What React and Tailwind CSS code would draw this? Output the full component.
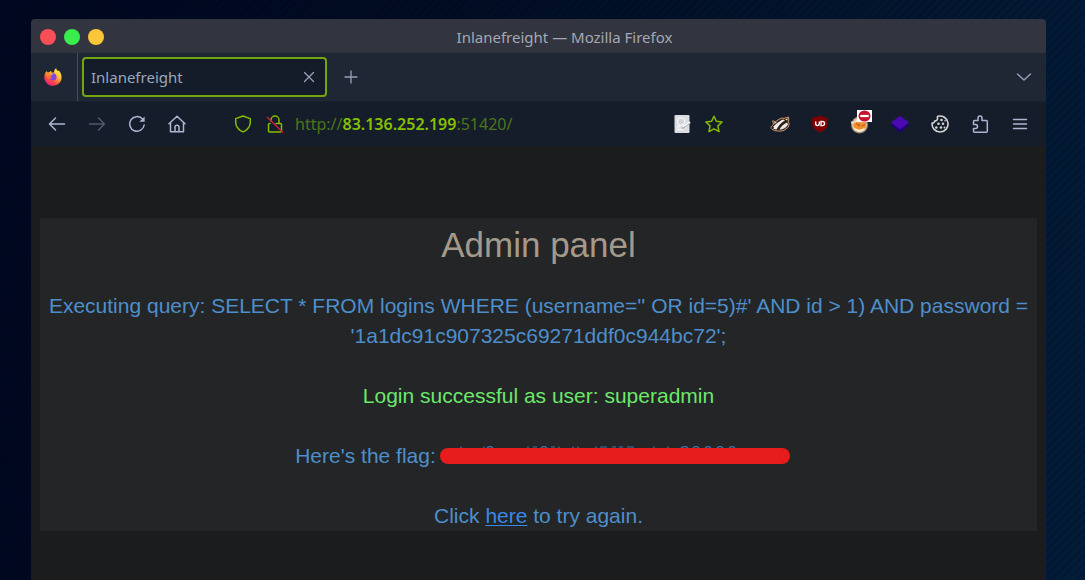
import { useState } from "react";

const line = {
  fill: "none",
  stroke: "currentColor",
  strokeLinecap: "round",
  strokeLinejoin: "round",
};

function Icon({ size = 18, width = 1.5, children }) {
  return (
    <svg width={size} height={size} viewBox="0 0 18 18" {...line} strokeWidth={width} aria-hidden="true">
      {children}
    </svg>
  );
}

function FirefoxLogo() {
  return (
    <svg width="18" height="18" viewBox="0 0 18 18" aria-hidden="true">
      <defs>
        <linearGradient id="flame" x1="0.85" y1="0.05" x2="0.25" y2="1">
          <stop offset="0" stopColor="#fff44f" />
          <stop offset="0.4" stopColor="#ffb02e" />
          <stop offset="0.7" stopColor="#ff4a3f" />
          <stop offset="1" stopColor="#e3168c" />
        </linearGradient>
      </defs>
      <path
        d="M2.4 3.2c.3 0 .9.6 1.4 1.2.5-.2 1-.2 1.500-.1C5.900 3.500 6.700 2.900 7.400 2.700c-.3.600-.3 1.200 0 1.700h2.700C9.900 2.800 10.700 1 12.200.2c.2 1.500 1 2.100 2 3.100.2-.3.200-.7.100-1.100 2 1.500 3.300 4.200 3.300 7.100 0 4.900-3.800 8.500-8.600 8.500S.3 14 .3 9.200C.3 6.700 1 4.700 2.400 3.200z"
        fill="url(#flame)"
      />
      <path d="M9 5.300c2.300 0 3.600 1.600 3.600 3.600S11.200 12.600 9.200 12.600 5.700 11.300 5.500 9.800c1.300.9 2.200.7 3-.2C7 9.300 6.100 8.600 6.400 7.800c.5-.6 1.800-.4 2.600-1.200-.6-.2-.9-.4-1-.9.300-.3.600-.4 1-.4z" fill="#8045e8" />
      <path d="M2.300 5.700c1.600-.4 3.700.1 5 .9-.9 1-2.400.8-3 1.600-.3 1.600 1.300 2.700 3 2.400-2.300 1.400-4.800-.500-5-4.900z" fill="#ff8a22" />
    </svg>
  );
}

function Badger() {
  return (
    <svg width="20" height="18" viewBox="0 0 20 18" aria-hidden="true">
      <path d="M.8 13.300c.4-1.700 1.800-2.600 2.700-4.100L2.600 5.800l3 .8L9 4.300l3-1.300 2 .4L18.500 2l.3 3-.5 2 1 1.500-1 3.600-4.300 3.300-4 .8-5.500-.6z" fill="#2a211e" stroke="#c99a76" strokeWidth="1" />
      <path d="M2 13.700c1.600-3.200 6.500-7.200 11-9.300l2 .8C11 7.500 8.500 10.800 6.500 14.500z" fill="#f4eee8" />
      <path d="M9.500 14.800c1-3 3.500-5.500 7.500-7.300l1.200 1.500c-1.300 3-3.700 5-8.700 5.800z" fill="#e9e4df" />
      <path d="M4 7.300l3-.3-2.400 2zM15 4.500l2.700-1.200-.3 2.200z" fill="#f1d8c1" />
      <path d="M1 13.400l1.500-1.600 1.600.7-.8 1.600z" fill="#111" />
    </svg>
  );
}

function UblockShield() {
  return (
    <svg width="18" height="18" viewBox="0 0 18 18" aria-hidden="true">
      <path d="M9 .4c2.500 1.500 5 2 7.800 2v6.200c0 4-3 6.700-7.800 9-4.800-2.300-7.800-5-7.800-9V2.400C4 2.400 6.500 1.900 9 .4z" fill="#800000" />
      <path d="M4.700 6.500v2.300a1.800 1.800 0 0 0 3.600 0V6.500M10 6.500v4.100h1.500a2 2 0 0 0 0-4.100z" fill="none" stroke="#fff" strokeWidth="1.400" />
    </svg>
  );
}

function FoxyProxy() {
  return (
    <svg width="24" height="24" viewBox="0 0 24 24" aria-hidden="true">
      <circle cx="9.500" cy="15" r="8.500" fill="#a08b78" />
      <circle cx="9.500" cy="15" r="7.300" fill="#eccaa4" />
      <path d="M.5 11.500l4 .6L7.500 9l3.500 2-3.500 3.500-5.500-.5z" fill="#eee6dd" />
      <path d="M3.500 13l5-1.500 3 1 4.500-.5v5L13 19.500H6.500L3.500 16.500z" fill="#f28f2c" />
      <path d="M6 13.500l4 1.700-2.500.6M11 16.500l4-2" fill="none" stroke="#b0601c" strokeWidth="1" />
      <path d="M5 19l4.500 2 4.500-2" fill="none" stroke="#fff3df" strokeWidth="1.400" />
      <rect x="7" y="0" width="15" height="12" fill="#fff" />
      <ellipse cx="14.500" cy="6" rx="6" ry="5.600" fill="#c4122f" />
      <rect x="10.300" y="4.900" width="8.400" height="2.200" fill="#fff" />
    </svg>
  );
}

function Layers() {
  return (
    <svg width="18" height="18" viewBox="0 0 18 18" aria-hidden="true">
      <path d="M0 10l9-6 9 6-9 7.500z" fill="#22007d" />
      <path d="M0 7.500L9 .8l9 6.700-9 6.700z" fill="#4a09b3" />
    </svg>
  );
}

function Cookie() {
  return (
    <svg width="18" height="18" viewBox="0 0 18 18" aria-hidden="true">
      <path d="M6.800 1.300A8 8 0 1 1 1.100 8.100c1.500.2 2.500-.5 2.500-2C5.500 6 7.300 4.600 6.300 2.200z" fill="none" stroke="#d3d3d3" strokeWidth="1.600" strokeLinejoin="round" />
      <g fill="#d3d3d3">
        <circle cx="10.500" cy="5" r="1.300" />
        <circle cx="7.500" cy="8.700" r="1.300" />
        <circle cx="12" cy="8.800" r="1.300" />
        <circle cx="5.300" cy="12.500" r="1.300" />
        <circle cx="10" cy="12.500" r="1.300" />
        <circle cx="13.500" cy="12.500" r=".9" />
        <circle cx="14" cy="5.800" r=".8" />
      </g>
    </svg>
  );
}

function PageNote() {
  return (
    <svg width="18" height="18" viewBox="0 0 18 18" aria-hidden="true">
      <rect x="1.500" y="0" width="15" height="18" rx="1" fill="#dcdde0" />
      <circle cx="8" cy="6.500" r="3.600" fill="#d3d5d9" stroke="#f6f7f8" strokeWidth="1.200" />
      <path d="M3.500 14.500h7M4 12l3-1" stroke="#f7f7f7" strokeWidth="1.500" />
      <path d="M9 13.500l8.500-6" stroke="#969aa1" strokeWidth="1.300" />
      <path d="M10 12l7-5" stroke="#fff" strokeWidth="1.200" />
    </svg>
  );
}

function ToolButton({ label, className = "", children }) {
  return (
    <button type="button" aria-label={label} className={`flex h-9 w-10 shrink-0 items-center justify-center ${className}`}>
      {children}
    </button>
  );
}

function AddressField() {
  const [url, setUrl] = useState("http://83.136.252.199:51420/");
  const [editing, setEditing] = useState(false);
  return (
    <div className="relative h-8 min-w-0 flex-1">
      <input
        id="address"
        aria-label="Address"
        value={editing ? url : ""}
        onChange={(e) => setUrl(e.target.value)}
        onFocus={() => setEditing(true)}
        onBlur={() => setEditing(false)}
        className="h-8 w-full bg-transparent pl-1 text-base text-[#7fb800] outline-none"
      />
      {!editing && (
        <span className="pointer-events-none absolute inset-y-0 left-1 flex items-center text-base whitespace-nowrap text-[#4b761b]">
          http://<b className="font-semibold text-[#84c000]">83.136.252.199</b>:51420/
        </span>
      )}
    </div>
  );
}

function TitleBar() {
  return (
    <header className="grid h-[34px] grid-cols-[1fr_auto_1fr] items-center rounded-t-sm bg-[#32353f] pt-0.5">
      <div className="flex gap-2 pl-[9px]">
        <button type="button" aria-label="Close window" className="size-4 rounded-full bg-[#f84f57]" />
        <button type="button" aria-label="Maximize window" className="size-4 rounded-full bg-[#38ed4c]" />
        <button type="button" aria-label="Minimize window" className="size-4 rounded-full bg-[#fdc638]" />
      </div>
      <span className="pl-13 text-[15px] text-[#a5a8b3]">Inlanefreight — Mozilla Firefox</span>
    </header>
  );
}

function TabStrip() {
  return (
    <div className="flex h-12 items-center bg-[#1f2734] pr-0.5 text-[#95a1b9]">
      <div className="flex h-full w-[47px] items-center justify-center border-r border-[#454d5e] pr-0.5">
        <FirefoxLogo />
      </div>
      <div className="ml-1 flex h-10 w-[245px] items-center justify-between rounded-sm border-2 border-[#73a60e] bg-[#141c29] pr-1 pl-[7px]">
        <span className="text-[15px] text-[#9aa7c0]">Inlanefreight</span>
        <button type="button" aria-label="Close tab" className="flex size-6 items-center justify-center">
          <Icon width={1.3}><path d="M4.500 4.500l9 9M13.500 4.500l-9 9" /></Icon>
        </button>
      </div>
      <ToolButton label="New tab" className="ml-1">
        <Icon width={1.3}><path d="M9 3v12M3 9h12" /></Icon>
      </ToolButton>
      <ToolButton label="List all tabs" className="ml-auto">
        <Icon width={1.4}><path d="M2.500 6L9 12l6.500-6" /></Icon>
      </ToolButton>
    </div>
  );
}

function NavBar() {
  return (
    <nav aria-label="Browser toolbar" className="flex h-[45px] items-center border-t border-[#18212f] bg-[#151d2a] px-1.5 text-[#aab6d3]">
      <ToolButton label="Back"><Icon><path d="M16.500 9h-15M7.500 3l-6 6 6 6" /></Icon></ToolButton>
      <ToolButton label="Forward" className="text-[#505a6c]"><Icon><path d="M1.500 9h15M10.500 3l6 6-6 6" /></Icon></ToolButton>
      <ToolButton label="Reload">
        <Icon>
          <path d="M16.200 10a7.300 7.300 0 1 1-2-6.200l1.300 1.300" />
          <path d="M16.600 1.500v5.200h-5.200z" fill="currentColor" stroke="none" />
        </Icon>
      </ToolButton>
      <ToolButton label="Home">
        <Icon><path d="M1 8.700L9 1.200l8 7.500M2.500 7.500v9.200h13V7.500M7 16.500v-4.300c0-2.500 4-2.500 4 0v4.300" /></Icon>
      </ToolButton>
      <div className="mr-[30px] ml-[30px] flex min-w-0 flex-1 items-center text-[#84bd00]">
        <button type="button" aria-label="Tracking protection" className="flex size-8 shrink-0 items-center justify-center">
          <Icon><path d="M9 1l7.300 2.600v3.600c0 4.400-2.700 7.600-7.300 9.700-4.600-2.100-7.300-5.300-7.300-9.700V3.600z" /></Icon>
        </button>
        <button type="button" aria-label="Connection not secure" className="flex size-8 shrink-0 items-center justify-center">
          <Icon>
            <path d="M5 6V5a4 4 0 0 1 8 0v3.500M4 8.500h-.5a1 1 0 0 0-1 1V16a1 1 0 0 0 1 1h11a1 1 0 0 0 1-1V9.500a1 1 0 0 0-1-1H10" />
            <path d="M1.500 2.500l15 14.500" stroke="#d11a47" />
          </Icon>
        </button>
        <AddressField />
        <button type="button" aria-label="Page action" className="flex size-8 shrink-0 items-center justify-center"><PageNote /></button>
        <button type="button" aria-label="Bookmark this page" className="flex size-8 shrink-0 items-center justify-center">
          <Icon><path d="M9 1.200l2.400 5.100 5.700.7-4.200 3.900 1.100 5.700-5-2.800-5 2.800 1.100-5.700L.9 7l5.700-.7z" /></Icon>
        </button>
      </div>
      <ToolButton label="Privacy Badger"><Badger /></ToolButton>
      <ToolButton label="uBlock Origin"><UblockShield /></ToolButton>
      <ToolButton label="FoxyProxy" className="pb-1 pl-1"><FoxyProxy /></ToolButton>
      <ToolButton label="Layers"><Layers /></ToolButton>
      <ToolButton label="Cookie editor"><Cookie /></ToolButton>
      <ToolButton label="Extensions">
        <Icon><path d="M2.500 8V6.500a1 1 0 0 1 1-1H7V3a2 2 0 0 1 4 0v2.500h4.300a1 1 0 0 1 1 1v9.700a1 1 0 0 1-1 1H3.500a1 1 0 0 1-1-1V13.500h2a2 2 0 0 0 0-4H2.500z" /></Icon>
      </ToolButton>
      <ToolButton label="Menu"><Icon><path d="M2.500 4.500h13M2.500 9h13M2.500 13.500h13" /></Icon></ToolButton>
    </nav>
  );
}

function Redaction() {
  return (
    <svg width="350" height="22" viewBox="0 0 350 22" className="ml-1 inline-block align-middle" role="img" aria-label="Hidden flag">
      <path
        d="M21 .5v2M44 .5v2M47 1.700q3-2 6 0M88 .5v2M93 1h4M101 1.700q3-2 6 0M111 1h4M119 .5v2M133 .5v2M138 .5v2M156 .5v2M160 1h7M172 1h4M179 1h4M187 1h7M214 .5v2M228 .5v2M241 1.700q4-2 7 0M253 1.700q3-2 6 0M265 1.700q3-2 6 0M277 1.700q3-2 6 0M289 1.700q3-2 6 0"
        fill="none"
        stroke="#4677ae"
        strokeWidth="1.200"
      />
      <rect x="0" y="2" width="350" height="16" rx="8" fill="#e71d1d" />
    </svg>
  );
}

function AdminPanel() {
  return (
    <main className="flex-1 bg-[#1b1c1d] px-[9px] pt-18 pb-12 font-['Liberation_Sans',Arial,sans-serif]">
      <section className="bg-[#242526] px-2 text-center text-[21px] leading-[30px] text-[#4d8fcc]">
        <h1 className="pt-[5px] pb-6 text-[35px] leading-11 text-[#a39a8b]">Admin panel</h1>
        <p className="pb-[30px]">
          Executing query: SELECT * FROM logins WHERE (username='' OR id=5)#' AND id &gt; 1) AND password = '1a1dc91c907325c69271ddf0c944bc72';
        </p>
        <p className="pb-[30px] text-[#6be86b]">Login successful as user: superadmin</p>
        <p className="pb-[30px] pl-2">
          Here's the flag:<Redaction />
        </p>
        <p>
          Click <a href="#login" className="text-[#3a88e8] underline decoration-1 underline-offset-2">here</a> to try again.
        </p>
      </section>
    </main>
  );
}

export default function App() {
  return (
    <div className="min-h-screen bg-[repeating-linear-gradient(135deg,rgba(0,0,0,0.16)_0_2px,transparent_2px_6px),linear-gradient(100deg,#000720,#010d24_40%,#031c39)] pt-[19px] pr-[39px] pl-[31px] font-['Noto_Sans',sans-serif]">
      <div className="flex min-h-[calc(100vh-19px)] flex-col">
        <TitleBar />
        <TabStrip />
        <NavBar />
        <AdminPanel />
      </div>
    </div>
  );
}
